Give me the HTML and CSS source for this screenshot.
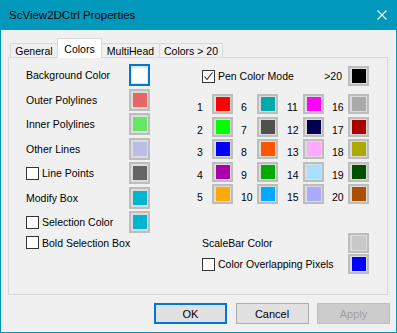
FILE: index.html
```html
<!DOCTYPE html>
<html lang="en">
<head>
    <meta charset="UTF-8">
    <title>ScView2DCtrl Properties</title>
    <link rel="stylesheet" href="styles.css">
</head>
<body>
    <div class="window">
        <div class="titlebar">
            <span class="title">ScView2DCtrl Properties</span>
            <svg class="close" width="10" height="10" viewBox="0 0 10 10">
                <path d="M0.5 0.5 L9.5 9.5 M9.5 0.5 L0.5 9.5" stroke="#fff" stroke-width="1.1" fill="none"/>
            </svg>
        </div>

        <div class="content">
            <div class="tabs">
                <div class="tab first">General</div>
                <div class="tab active">Colors</div>
                <div class="tab">MultiHead</div>
                <div class="tab">Colors &gt; 20</div>
            </div>

            <div class="page">
                <!-- left column: named colors -->
                <div class="left">
                    <div class="lbl">Background Color</div>
                    <div class="sw focus"><i style="background:#ffffff"></i></div>

                    <div class="lbl">Outer Polylines</div>
                    <div class="sw"><i style="background:#e86666"></i></div>

                    <div class="lbl">Inner Polylines</div>
                    <div class="sw"><i style="background:#66e666"></i></div>

                    <div class="lbl">Other Lines</div>
                    <div class="sw"><i style="background:#bcbce6"></i></div>

                    <div class="lbl"><span class="chk"></span>Line Points</div>
                    <div class="sw"><i style="background:#646464"></i></div>

                    <div class="lbl">Modify Box</div>
                    <div class="sw"><i style="background:#00b4d2"></i></div>

                    <div class="lbl"><span class="chk"></span>Selection Color</div>
                    <div class="sw"><i style="background:#00b4d2"></i></div>

                    <div class="lbl wide"><span class="chk"></span>Bold Selection Box</div>
                </div>

                <!-- right column: pen colors -->
                <div class="right">
                    <div class="pen">
                        <span class="chk checked">
                            <svg width="11" height="11" viewBox="0 0 11 11"><polyline points="1.5,5.5 4,8.5 9.5,1.5" stroke="#222" stroke-width="1.1" fill="none"/></svg>
                        </span>
                        <span class="grow">Pen Color Mode</span>
                        <span class="over">&gt;20</span>
                        <div class="sw"><i style="background:#000000"></i></div>
                    </div>

                    <div class="nums">
                        <span class="num">1</span><div class="sw"><i style="background:#ff0000"></i></div>
                        <span class="num">6</span><div class="sw"><i style="background:#00aaaa"></i></div>
                        <span class="num">11</span><div class="sw"><i style="background:#ff00ff"></i></div>
                        <span class="num">16</span><div class="sw"><i style="background:#aaaaaa"></i></div>

                        <span class="num">2</span><div class="sw"><i style="background:#00ff00"></i></div>
                        <span class="num">7</span><div class="sw"><i style="background:#505050"></i></div>
                        <span class="num">12</span><div class="sw"><i style="background:#000050"></i></div>
                        <span class="num">17</span><div class="sw"><i style="background:#aa0000"></i></div>

                        <span class="num">3</span><div class="sw"><i style="background:#0000ff"></i></div>
                        <span class="num">8</span><div class="sw"><i style="background:#ff5500"></i></div>
                        <span class="num">13</span><div class="sw"><i style="background:#ffaaff"></i></div>
                        <span class="num">18</span><div class="sw"><i style="background:#aaaa00"></i></div>

                        <span class="num">4</span><div class="sw"><i style="background:#aa00aa"></i></div>
                        <span class="num">9</span><div class="sw"><i style="background:#00aa00"></i></div>
                        <span class="num">14</span><div class="sw"><i style="background:#aae0ff"></i></div>
                        <span class="num">19</span><div class="sw"><i style="background:#005000"></i></div>

                        <span class="num">5</span><div class="sw"><i style="background:#ffaa00"></i></div>
                        <span class="num">10</span><div class="sw"><i style="background:#00aaff"></i></div>
                        <span class="num">15</span><div class="sw"><i style="background:#aaaaff"></i></div>
                        <span class="num">20</span><div class="sw"><i style="background:#aa5000"></i></div>
                    </div>

                    <div class="opt scale">
                        <span class="grow">ScaleBar Color</span>
                        <div class="sw"><i style="background:#c8c8c8"></i></div>
                    </div>
                    <div class="opt overlap">
                        <span class="chk"></span>
                        <span class="grow">Color Overlapping Pixels</span>
                        <div class="sw"><i style="background:#0000ff"></i></div>
                    </div>
                </div>
            </div>

            <div class="buttons">
                <button class="btn default">OK</button>
                <button class="btn">Cancel</button>
                <button class="btn" disabled>Apply</button>
            </div>
        </div>
    </div>
</body>
</html>
```

FILE: styles.css
```css
* {
    box-sizing: border-box;
}
body {
    margin: 0;
    font-family: "Liberation Sans", Arial, sans-serif;
    font-size: 10.5px;
    color: #000;
    background: #f0f0f0;
}
.window {
    width: 397px;
    height: 333px;
    border: 1px solid #0099bc;
    border-top: 0;
    background: #f0f0f0;
    display: flex;
    flex-direction: column;
}
.titlebar {
    height: 30px;
    background: #0099bc;
    display: flex;
    align-items: center;
    justify-content: space-between;
    padding: 0 9px 0 8px;
}
.title {
    font-size: 11.5px;
}
.content {
    flex: 1;
    padding: 0 8px 0 7px;
    display: flex;
    flex-direction: column;
}
.tabs {
    display: flex;
    align-items: flex-end;
    height: 27px;
    padding-left: 2px;
}
.tab {
    height: 14px;
    border: 1px solid #d9d9d9;
    border-bottom: 0;
    margin-left: -1px;
    background: #f0f0f0;
    display: flex;
    align-items: center;
    justify-content: center;
    line-height: 12px;
}
.tab:nth-child(1) { width: 48px; margin-left: 0; }
.tab:nth-child(2) { width: 45px; }
.tab:nth-child(3) { width: 59px; }
.tab:nth-child(4) { width: 64px; }
.tab.active {
    height: 20px;
    background: #fff;
    margin-bottom: -1px;
    position: relative;
    z-index: 1;
}
.page {
    height: 238px;
    border: 1px solid #d9d9d9;
    display: flex;
    padding: 6px 0 0 17px;
}
.left {
    width: 124px;
    display: grid;
    grid-template-columns: 103px 21px;
    grid-template-rows: repeat(7, 22px) 14px;
    row-gap: 2.5px;
    align-content: start;
}
.lbl {
    display: flex;
    align-items: center;
}
.lbl.wide {
    grid-column: 1 / 3;
}
.chk {
    width: 13px;
    height: 13px;
    border: 1px solid #333;
    background: #fff;
    margin-right: 3px;
    flex: none;
    display: flex;
    align-items: center;
    justify-content: center;
}
.sw {
    width: 21px;
    height: 22px;
    border: 2px solid #bdbdbd;
    background: #dcdcdc;
    display: flex;
    align-items: center;
    justify-content: center;
}
.sw i {
    display: block;
    width: 14px;
    height: 14px;
}
.sw.focus {
    border-color: #0078d7;
    background: #e3e3e3;
}
.sw.focus i {
    width: 15px;
    height: 15px;
}
.right {
    margin-left: 47px;
    width: 172px;
    display: flex;
    flex-direction: column;
}
.right .sw {
    height: 20px;
}
.grow {
    flex: 1;
}
.pen {
    display: flex;
    align-items: center;
    height: 20px;
    margin-top: 2px;
    padding-left: 5px;
}
.over {
    margin-right: 6px;
}
.nums {
    margin-top: 8px;
    display: grid;
    grid-template-columns: 15px 21px 24px 21px 25px 21px 24px 21px;
    grid-auto-rows: 20px;
    row-gap: 2.5px;
}
.num {
    align-self: end;
    line-height: 14px;
    padding-left: 8px;
}
.num:nth-child(8n+1) {
    padding-left: 0;
}
.num:nth-child(8n+5) {
    padding-left: 9px;
}
.opt {
    display: flex;
    align-items: center;
    height: 20px;
    padding-left: 5px;
}
.scale {
    margin-top: 29px;
}
.overlap {
    margin-top: 1px;
}
.buttons {
    display: flex;
    justify-content: flex-end;
    gap: 8.5px;
    margin: 8px -2px 0 0;
}
.btn {
    width: 73px;
    height: 21px;
    padding: 0;
    border: 1px solid #adadad;
    background: #e1e1e1;
    font: inherit;
    font-size: 11px;
    color: #000;
}
.btn.default {
    border: 2px solid #0078d7;
}
.btn:disabled {
    background: #cccccc;
    border-color: #bfbfbf;
    color: #a0a0a0;
}
```
